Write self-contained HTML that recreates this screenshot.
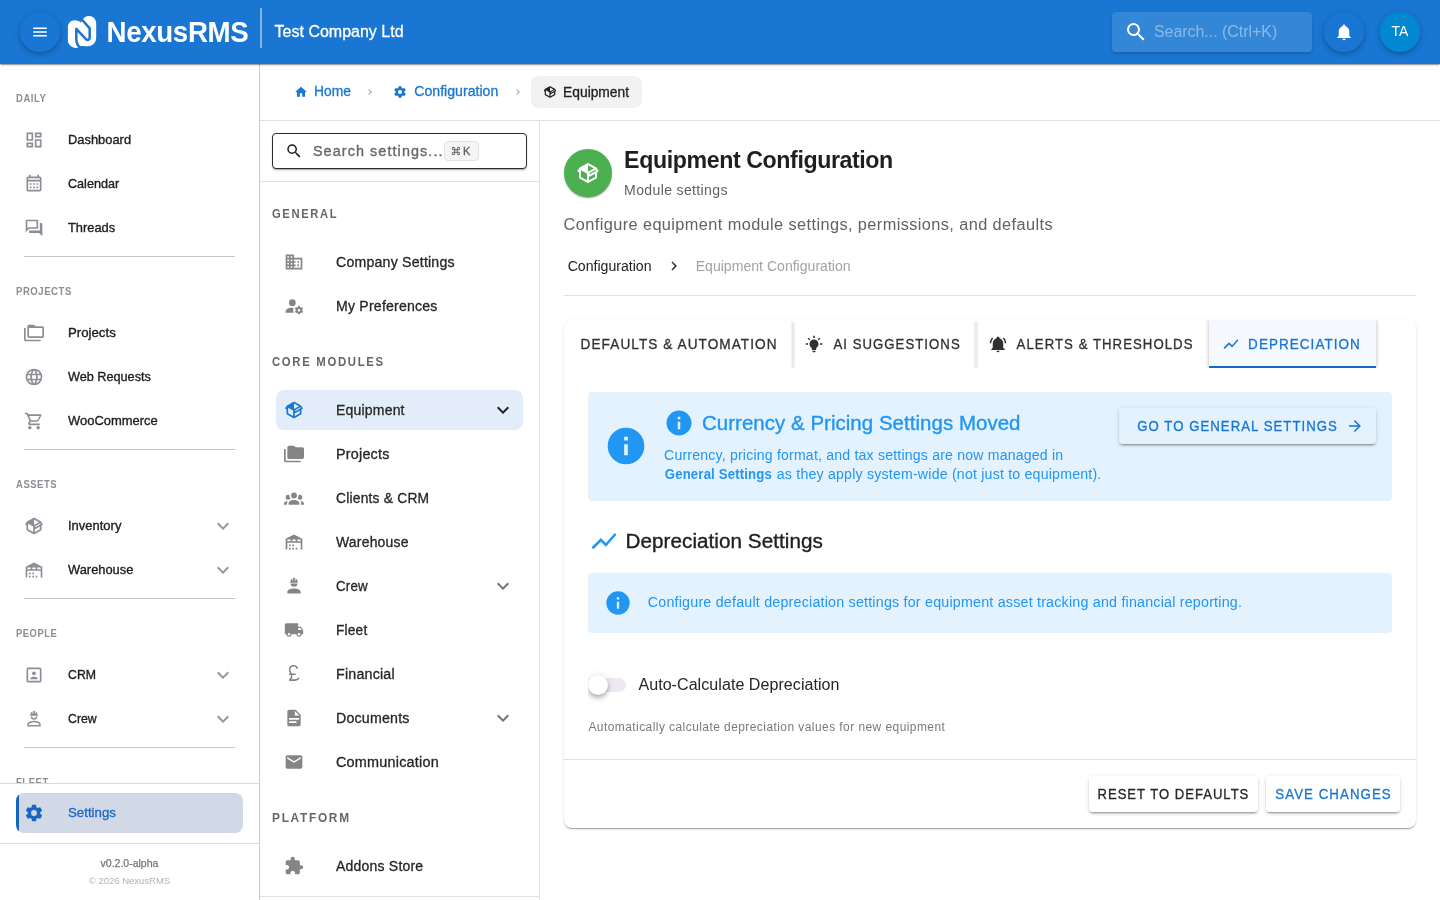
<!DOCTYPE html>
<html lang="en"><head>
<meta charset="utf-8">
<title>NexusRMS - Equipment Configuration</title>
<style>
*{box-sizing:border-box;margin:0;padding:0}
html,body{width:1440px;height:900px;overflow:hidden;background:#fff}
body{font-family:"Liberation Sans",sans-serif;color:#212121;font-size:14px;position:relative;will-change:transform}
svg{display:block;fill:currentColor}
.abs{position:absolute}
/* ---------- top bar ---------- */
#top{position:absolute;left:0;top:0;width:1440px;height:64px;background:#1976d2;z-index:10;box-shadow:0 2px 1px -1px rgba(0,0,0,.2),0 1px 1px 0 rgba(0,0,0,.14),0 1px 3px 0 rgba(0,0,0,.12)}
#menubtn{position:absolute;left:20px;top:12px;width:40px;height:40px;border-radius:50%;background:#1976d2;box-shadow:0 3px 5px -1px rgba(0,0,0,.2),0 1px 8px 0 rgba(0,0,0,.12);color:#fff}
#menubtn svg{position:absolute;left:11px;top:11px;width:18px;height:18px}
#logo{position:absolute;left:62px;top:10px;width:40px;height:44px}
#brand{position:absolute;left:107px;top:14px;color:#fff;font-weight:700;font-size:29px;line-height:36px;letter-spacing:-.4px;white-space:nowrap}
#vdiv{position:absolute;left:260px;top:8px;width:2px;height:40px;background:rgba(255,255,255,.45)}
#company{position:absolute;left:274px;top:22px;color:#fff;font-size:16px;line-height:20px;white-space:nowrap;-webkit-text-stroke:.3px #fff}
#tsearch{position:absolute;left:1112px;top:12px;width:200px;height:40px;border-radius:4px;background:rgba(255,255,255,.12);box-shadow:0 2px 3px rgba(0,0,0,.18);color:#fff}
#tsearch svg{position:absolute;left:12px;top:8px;width:24px;height:24px}
#tsearch span{position:absolute;left:42px;top:10px;font-size:16px;line-height:20px;color:rgba(255,255,255,.42);white-space:nowrap}
#bell{position:absolute;left:1324px;top:12px;width:40px;height:40px;border-radius:50%;background:#1976d2;box-shadow:0 3px 5px -1px rgba(0,0,0,.2),0 1px 8px 0 rgba(0,0,0,.12);color:#fff}
#bell svg{position:absolute;left:11px;top:11px;width:18px;height:18px}
#avatar{position:absolute;left:1380px;top:12px;width:40px;height:40px;border-radius:50%;background:#0288d1;box-shadow:0 3px 5px -1px rgba(0,0,0,.2),0 1px 8px 0 rgba(0,0,0,.12);color:#fff;text-align:center;font-size:14px;line-height:38px}
/* ---------- left nav ---------- */
#nav{position:absolute;left:0;top:64px;width:260px;height:836px;border-right:1px solid #cdc8d5;background:#fff;overflow:hidden}
.nlabel{position:absolute;left:16px;font-size:10.5px;font-weight:700;letter-spacing:.6px;color:#8e8c94;line-height:12px;white-space:nowrap}
.nitem{position:absolute;left:16px;width:227px;height:40px}
.nitem svg.ic{position:absolute;left:8px;top:10px;width:20px;height:20px;color:#8e8c94}
.nitem span{position:absolute;left:52px;top:11px;font-size:13px;line-height:18px;color:#1d1d1f;white-space:nowrap;font-weight:400;-webkit-text-stroke:.35px #1d1d1f}
.nitem svg.ch{position:absolute;left:195px;top:8px;width:24px;height:24px;color:#97959d}
.nhr{position:absolute;left:24px;width:211px;height:1px;background:#c4c2ca}

#navscroll{position:absolute;left:0;top:0;width:259px;height:719px;overflow:hidden}
#navfoot{position:absolute;left:0;top:719px;width:259px;height:117px;border-top:1px solid #dcdae0;background:#fff}
#setitem{position:absolute;left:16px;top:9px;width:227px;height:40px;border-radius:8px;background:#d1d9e6;overflow:hidden;color:#1967c4}
#setitem i{position:absolute;left:0;top:0;width:3px;height:40px;background:#1565c0}
#setitem svg{position:absolute;left:8px;top:10px;width:20px;height:20px}
#setitem span{position:absolute;left:52px;top:11px;font-size:13.5px;line-height:18px;white-space:nowrap;-webkit-text-stroke:.3px #1967c4}
#navfoot:after{content:"";position:absolute;left:0;top:59px;width:259px;height:1px;background:#dcdae0}
#navver{position:absolute;left:0;top:73px;width:259px;text-align:center;font-size:10.5px;line-height:12px;color:#76747c;-webkit-text-stroke:.25px #76747c}
#navcopy{position:absolute;left:0;top:91px;width:259px;text-align:center;font-size:9.5px;line-height:12px;color:#b3b1b8}
/* ---------- settings sidebar ---------- */
#crumbs{position:absolute;left:260px;top:64px;width:1180px;height:57px;border-bottom:1px solid #e0e0e0;background:#fff}
#side{position:absolute;left:260px;top:121px;width:280px;height:779px;border-right:1px solid #e0e0e0;background:#fff;overflow:hidden}
#main{position:absolute;left:540px;top:121px;width:900px;height:779px;background:#fff;overflow:hidden}

.bc{position:absolute;top:17px;font-size:14px;line-height:20px;white-space:nowrap;-webkit-text-stroke:.3px currentColor}
#bcchip{position:absolute;left:271px;top:12px;width:111px;height:32px;border-radius:8px;background:#f2f2f2;color:#212121}
#bcchip svg{position:absolute;left:11.5px;top:9px;width:14px;height:14px}
#bcchip span{position:absolute;left:31.5px;top:5.5px;font-size:14px;line-height:20px;white-space:nowrap;-webkit-text-stroke:.3px currentColor}
#ssearch{position:absolute;left:12px;top:12px;width:255px;height:36px;border:1px solid #2b2b2b;border-radius:4px;background:#fff;box-shadow:0 2px 2px -1px rgba(0,0,0,.28),0 1px 2px 0 rgba(0,0,0,.12)}
#ssearch .mg{position:absolute;left:12px;top:8px;width:18px;height:18px;color:#212121}
#ssearch .ph{position:absolute;left:40px;top:7px;font-size:14px;line-height:20px;letter-spacing:1.05px;color:#686868;white-space:nowrap;-webkit-text-stroke:.35px currentColor}
#ssearch .kbd{position:absolute;left:170.5px;top:6.5px;width:35px;height:20px;border:1px solid #e2e2e2;border-radius:4px;background:#f5f5f5;color:#616161;font-size:11px;line-height:18px;font-weight:400;padding-left:18.5px;-webkit-text-stroke:.35px #616161}
#ssearch .kbd svg{position:absolute;left:6.5px;top:4px;width:10px;height:10px}
.shr{position:absolute;left:0;width:279px;height:1px;background:#e0e0e0}
.slabel{position:absolute;left:12px;font-size:12px;line-height:24px;letter-spacing:1.75px;color:#666;white-space:nowrap;font-weight:700}
.sitem{position:absolute;left:16px;width:247px;height:40px;border-radius:8px}
.sitem.act{background:#e3edf9}
.sitem svg.ic{position:absolute;left:8px;top:10px;width:20px;height:20px;color:#858585}
.sitem.act svg.ic{color:#1976d2}
.sitem span{position:absolute;left:60px;top:10px;font-size:14px;line-height:20px;letter-spacing:.2px;color:#262626;white-space:nowrap;-webkit-text-stroke:.3px currentColor}
.sitem svg.ch{position:absolute;left:215px;top:8px;width:24px;height:24px;color:#757575}
.sitem.act svg.ch{color:#212121}

#mavatar{position:absolute;left:24px;top:28px;width:48px;height:48px;border-radius:50%;background:#4caf50;color:#fff;box-shadow:0 2px 1px -1px rgba(0,0,0,.2),0 1px 1px 0 rgba(0,0,0,.14),0 1px 3px 0 rgba(0,0,0,.12)}
#mavatar svg{position:absolute;left:12px;top:12px;width:24px;height:24px}
#mtitle{position:absolute;left:84px;top:23px;font-size:23px;line-height:32px;font-weight:700;letter-spacing:-.4px;color:#1f1f1f;white-space:nowrap}
#msub{position:absolute;left:84px;top:59px;font-size:14px;line-height:20px;letter-spacing:.35px;color:#616161;white-space:nowrap}
#mdesc{position:absolute;left:24px;top:92px;font-size:16px;line-height:24px;letter-spacing:.4px;color:#616161;white-space:nowrap}
.mbc{position:absolute;top:135px;font-size:14px;line-height:20px;white-space:nowrap}
#mhr{position:absolute;left:24px;top:174px;width:852px;height:1px;background:#e0e0e0}
#card{position:absolute;left:24px;top:199px;width:852px;height:508px;border-radius:8px;background:#fff;box-shadow:0 2px 1px -1px rgba(0,0,0,.2),0 1px 1px 0 rgba(0,0,0,.14),0 1px 3px 0 rgba(0,0,0,.12)}
.tab{position:absolute;top:0;height:48px;color:#303030}
.tab svg{position:absolute;top:15px;width:18px;height:18px}
.tab span{position:absolute;top:14px;font-size:14px;line-height:20px;letter-spacing:1.1px;white-space:nowrap;-webkit-text-stroke:.3px currentColor}
.tab.on{color:#1976d2;background:#f5f9fd;box-shadow:0 0 4px rgba(0,0,0,.3);clip-path:inset(0 -6px 0 -6px)}
.tab.on i{position:absolute;left:0;bottom:0;width:100%;height:2px;background:#1668c6}
.tsep{position:absolute;top:1.5px;width:2px;height:46px;background:rgba(0,0,0,.15);filter:blur(1.1px)}
#al1{position:absolute;left:24px;top:72px;width:804px;height:108.5px;border-radius:4px;background:#e4f2fe;color:#2196f3}
#al1 .big{position:absolute;left:16px;top:31.5px;width:44px;height:44px}
#al1 .sm{position:absolute;left:75.5px;top:16px;width:30px;height:30px}
#al1 .t{position:absolute;left:114px;top:15px;font-size:20px;line-height:32px;white-space:nowrap;letter-spacing:.05px;-webkit-text-stroke:.35px currentColor}
#al1 .b{position:absolute;left:76px;top:53px;font-size:14px;line-height:19px;white-space:nowrap;letter-spacing:.2px}
#al1 .btn{position:absolute;left:531px;top:16px;width:257px;height:36px;border-radius:4px;background:#e4f2fe;color:#1976d2;box-shadow:0 3px 1px -2px rgba(0,0,0,.2),0 2px 2px 0 rgba(0,0,0,.14),0 1px 5px 0 rgba(0,0,0,.12)}
#al1 .btn span{position:absolute;left:18px;top:8px;font-size:14px;line-height:20px;letter-spacing:1.1px;white-space:nowrap;-webkit-text-stroke:.3px currentColor}
#al1 .btn svg{position:absolute;left:227px;top:9px;width:18px;height:18px}
#sech{position:absolute;left:62px;top:205px;font-size:20px;line-height:32px;color:#212121;white-space:nowrap;letter-spacing:.05px;-webkit-text-stroke:.35px currentColor}
#al2{position:absolute;left:24px;top:253px;width:804px;height:60px;border-radius:4px;background:#e4f2fe;color:#2196f3}
#al2 svg{position:absolute;left:16px;top:15.5px;width:28px;height:28px}
#al2 span{position:absolute;left:60px;top:19px;font-size:14px;line-height:20px;white-space:nowrap;letter-spacing:.2px}
#sw{position:absolute;left:24px;top:352.5px;width:40px;height:24px;clip-path:inset(-12px -12px -12px 0)}
#sw .tr{position:absolute;left:2px;top:5px;width:36px;height:14px;border-radius:7px;background:#efe9f2}
#sw .th{position:absolute;left:0;top:2px;width:20px;height:20px;border-radius:50%;background:#fff;box-shadow:0 2px 4px -1px rgba(0,0,0,.2),0 4px 5px 0 rgba(0,0,0,.14),0 1px 10px 0 rgba(0,0,0,.12)}
#swl{position:absolute;left:74px;top:353px;font-size:16px;line-height:24px;color:#262626;white-space:nowrap;letter-spacing:.05px}
#hint{position:absolute;left:24px;top:399px;font-size:12px;line-height:16px;color:#7a7a7a;white-space:nowrap;letter-spacing:.45px}
#chr{position:absolute;left:0;top:439px;width:852px;height:1px;background:#e0e0e0}
.fbtn{position:absolute;top:456px;height:36px;border-radius:4px;background:#fff;box-shadow:0 3px 1px -2px rgba(0,0,0,.2),0 2px 2px 0 rgba(0,0,0,.14),0 1px 5px 0 rgba(0,0,0,.12)}
.fbtn span{position:absolute;left:9.5px;top:8px;font-size:14px;line-height:20px;letter-spacing:1.1px;white-space:nowrap;-webkit-text-stroke:.3px currentColor}
#x16{transform-origin:0 50%;transform:scaleX(.905)}
.sitem svg.gbp{position:absolute;left:4px;top:6px;width:30px;height:30px}
</style>
<style id="fit">
#brand{transform-origin:0 50%;transform:translateX(-0.42px) scaleX(0.9562)}
#company{transform-origin:0 50%;transform:translateX(0.60px) scaleX(0.9998)}
#x1{transform-origin:0 50%;transform:translateX(-0.03px) scaleX(0.9938)}
#x2{transform-origin:0 50%;transform:scaleX(0.9038)}
#x3{transform-origin:0 50%;transform:scaleX(0.9913)}
#x4{transform-origin:0 50%;transform:scaleX(0.9699)}
#x5{transform-origin:0 50%;transform:scaleX(0.9875)}
#x6{transform-origin:0 50%;transform:scaleX(0.9100)}
#x7{transform-origin:0 50%;transform:scaleX(1.0170)}
#x8{transform-origin:0 50%;transform:scaleX(0.9742)}
#x9{transform-origin:0 50%;transform:scaleX(0.9971)}
#x10{transform-origin:0 50%;transform:scaleX(0.9023)}
#x11{transform-origin:0 50%;transform:scaleX(0.9984)}
#x12{transform-origin:0 50%;transform:scaleX(0.9907)}
#x13{transform-origin:0 50%;transform:scaleX(0.8952)}
#x14{transform-origin:0 50%;transform:scaleX(0.9454)}
#x15{transform-origin:0 50%;transform:scaleX(0.9485)}
#x17{transform-origin:0 50%;transform:scaleX(0.9819)}
#x18{transform-origin:0 50%;transform:translateX(-0.94px) scaleX(0.9888)}
#x19{transform-origin:0 50%;transform:translateX(0.30px) scaleX(1.0081)}
#x20{transform-origin:0 50%;transform:translateX(0.10px) scaleX(0.9851)}
#x21{transform-origin:0 50%;transform:translateX(-0.10px) scaleX(1.0284)}
#x23{transform-origin:0 50%;transform:scaleX(0.9337)}
#x24{transform-origin:0 50%;transform:scaleX(1.0101)}
#x25{transform-origin:0 50%;transform:scaleX(1.0079)}
#x26{transform-origin:0 50%;transform:scaleX(0.9473)}
#x27{transform-origin:0 50%;transform:scaleX(0.9996)}
#x28{transform-origin:0 50%;transform:scaleX(1.0269)}
#x29{transform-origin:0 50%;transform:scaleX(0.9886)}
#x30{transform-origin:0 50%;transform:scaleX(0.9973)}
#x31{transform-origin:0 50%;transform:scaleX(0.9530)}
#x32{transform-origin:0 50%;transform:scaleX(0.9779)}
#x33{transform-origin:0 50%;transform:scaleX(1.0175)}
#x34{transform-origin:0 50%;transform:scaleX(1.0142)}
#x35{transform-origin:0 50%;transform:scaleX(1.0300)}
#x36{transform-origin:0 50%;transform:scaleX(0.9873)}
#x37{transform-origin:0 50%;transform:scaleX(1.0013)}
#mtitle{transform-origin:0 50%;transform:translateX(0.10px) scaleX(1.0075)}
#msub{transform-origin:0 50%;transform:translateX(0.10px) scaleX(1.0039)}
#mdesc{transform-origin:0 50%;transform:translateX(-0.41px) scaleX(1.0192)}
#x38{transform-origin:0 50%;transform:translateX(-0.35px) scaleX(1.0076)}
#x39{transform-origin:0 50%;transform:translateX(-0.30px) scaleX(1.0052)}
#x40{transform-origin:0 50%;transform:translateX(-0.42px) scaleX(0.9717)}
#x41{transform-origin:0 50%;transform:translateX(1.45px) scaleX(0.9413)}
#x42{transform-origin:0 50%;transform:translateX(1.60px) scaleX(0.9427)}
#x43{transform-origin:0 50%;transform:translateX(-0.90px) scaleX(0.9620)}
#x44{transform-origin:0 50%;transform:translateX(-0.05px) scaleX(1.0217)}
#x45{transform-origin:0 50%;transform:translateX(0.07px) scaleX(1.0052)}
#x50{transform-origin:0 50%;transform:translateX(0.80px) scaleX(0.9365)}
#x51{transform-origin:0 50%;transform:translateX(-0.20px) scaleX(1.0106)}
#x46{transform-origin:0 50%;transform:translateX(0.20px) scaleX(0.9426)}
#sech{transform-origin:0 50%;transform:translateX(-0.45px) scaleX(1.0319)}
#x47{transform-origin:0 50%;transform:translateX(-0.24px) scaleX(1.0198)}
#swl{transform-origin:0 50%;transform:translateX(0.40px) scaleX(1.0030)}
#hint{transform-origin:0 50%;transform:translateX(0.40px) scaleX(0.9961)}
#x48{transform-origin:0 50%;transform:translateX(-1.50px) scaleX(0.9306)}
#x49{transform-origin:0 50%;transform:translateX(-0.70px) scaleX(0.9493)}
</style>
</head>
<body>
<svg width="0" height="0" style="position:absolute">
<defs>
<symbol id="i-menu" viewBox="0 0 24 24"><path d="M3,6H21V8H3V6M3,11H21V13H3V11M3,16H21V18H3V16Z"></path></symbol>
<symbol id="i-magnify" viewBox="0 0 24 24"><path d="M9.5,3A6.5,6.5 0 0,1 16,9.5C16,11.11 15.41,12.59 14.44,13.73L14.71,14H15.5L20.5,19L19,20.5L14,15.5V14.71L13.73,14.44C12.59,15.41 11.11,16 9.5,16A6.5,6.5 0 0,1 3,9.5A6.5,6.5 0 0,1 9.5,3M9.5,5C7,5 5,7 5,9.5C5,12 7,14 9.5,14C12,14 14,12 14,9.5C14,7 12,5 9.5,5Z"></path></symbol>
<symbol id="i-bell" viewBox="0 0 24 24"><path d="M21,19V20H3V19L5,17V11C5,7.9 7.03,5.17 10,4.29C10,4.19 10,4.1 10,4A2,2 0 0,1 12,2A2,2 0 0,1 14,4C14,4.1 14,4.19 14,4.29C16.97,5.17 19,7.9 19,11V17L21,19M14,21A2,2 0 0,1 12,23A2,2 0 0,1 10,21"></path></symbol>
<symbol id="i-dash" viewBox="0 0 24 24"><path d="M19,5V7H15V5H19M9,5V11H5V5H9M19,13V19H15V13H19M9,17V19H5V17H9M21,3H13V9H21V3M11,3H3V13H11V3M21,11H13V21H21V11M11,15H3V21H11V15Z"></path></symbol>
<symbol id="i-cal" viewBox="0 0 24 24"><path d="M7 11H9V13H7V11M21 5V19C21 20.11 20.11 21 19 21H5C3.89 21 3 20.1 3 19V5C3 3.9 3.9 3 5 3H6V1H8V3H16V1H18V3H19C20.11 3 21 3.9 21 5M5 7H19V5H5V7M19 19V9H5V19H19M15 13V11H17V13H15M11 13V11H13V13H11M7 15H9V17H7V15M15 17V15H17V17H15M11 17V15H13V17H11Z"></path></symbol>
<symbol id="i-forum" viewBox="0 0 24 24"><path d="M15,4V11H5.17L4,12.17V4H15M16,2H3A1,1 0 0,0 2,3V17L6,13H16A1,1 0 0,0 17,12V3A1,1 0 0,0 16,2M21,6H19V15H6V17A1,1 0 0,0 7,18H18L22,22V7A1,1 0 0,0 21,6Z"></path></symbol>
<symbol id="i-folders-o" viewBox="0 0 24 24"><path d="M22,4A2,2 0 0,1 24,6V16A2,2 0 0,1 22,18H6A2,2 0 0,1 4,16V4A2,2 0 0,1 6,2H12L14,4H22M2,6V20H20V22H2A2,2 0 0,1 0,20V11H0V6H2M6,6V16H22V6H6Z"></path></symbol>
<symbol id="i-folders" viewBox="0 0 24 24"><path d="M22,4H14L12,2H6A2,2 0 0,0 4,4V16A2,2 0 0,0 6,18H22A2,2 0 0,0 24,16V6A2,2 0 0,0 22,4M2,6H0V11H0V20A2,2 0 0,0 2,22H20V20H2V6Z"></path></symbol>
<symbol id="i-web" viewBox="0 0 24 24"><path d="M16.36,14C16.44,13.34 16.5,12.68 16.5,12C16.5,11.32 16.44,10.66 16.36,10H19.74C19.9,10.64 20,11.31 20,12C20,12.69 19.9,13.36 19.74,14M14.59,19.56C15.19,18.45 15.65,17.25 15.97,16H18.92C17.96,17.65 16.43,18.93 14.59,19.56M14.34,14H9.66C9.56,13.34 9.5,12.68 9.5,12C9.5,11.32 9.56,10.65 9.66,10H14.34C14.43,10.65 14.5,11.32 14.5,12C14.5,12.68 14.43,13.34 14.34,14M12,19.96C11.17,18.76 10.5,17.43 10.09,16H13.91C13.5,17.43 12.83,18.76 12,19.96M8,8H5.08C6.03,6.34 7.57,5.06 9.4,4.44C8.8,5.55 8.35,6.75 8,8M5.08,16H8C8.35,17.25 8.8,18.45 9.4,19.56C7.57,18.93 6.03,17.65 5.08,16M4.26,14C4.1,13.36 4,12.69 4,12C4,11.31 4.1,10.64 4.26,10H7.64C7.56,10.66 7.5,11.32 7.5,12C7.5,12.68 7.56,13.34 7.64,14M12,4.03C12.83,5.23 13.5,6.57 13.91,8H10.09C10.5,6.57 11.17,5.23 12,4.03M18.92,8H15.97C15.65,6.75 15.19,5.55 14.59,4.44C16.43,5.07 17.96,6.34 18.92,8M12,2C6.47,2 2,6.5 2,12A10,10 0 0,0 12,22A10,10 0 0,0 22,12A10,10 0 0,0 12,2Z"></path></symbol>
<symbol id="i-cart" viewBox="0 0 24 24"><path d="M17,18A2,2 0 0,1 19,20A2,2 0 0,1 17,22C15.89,22 15,21.1 15,20C15,18.89 15.89,18 17,18M1,2H4.27L5.21,4H20A1,1 0 0,1 21,5C21,5.17 20.95,5.34 20.88,5.5L17.3,11.97C16.96,12.58 16.3,13 15.55,13H8.1L7.2,14.63L7.17,14.75A0.25,0.25 0 0,0 7.42,15H19V17H7C5.89,17 5,16.1 5,15C5,14.65 5.09,14.32 5.24,14.04L6.6,11.59L3,4H1V2M7,18A2,2 0 0,1 9,20A2,2 0 0,1 7,22C5.89,22 5,21.1 5,20C5,18.89 5.89,18 7,18M16,11L18.78,6H6.14L8.5,11H16Z"></path></symbol>
<symbol id="i-box" viewBox="0 0 24 24"><path d="M2,10.96C1.5,10.68 1.35,10.07 1.63,9.59L3.13,7C3.24,6.8 3.41,6.66 3.6,6.58L11.43,2.18C11.59,2.06 11.79,2 12,2C12.21,2 12.41,2.06 12.57,2.18L20.47,6.62C20.66,6.72 20.82,6.88 20.91,7.08L22.36,9.6C22.64,10.08 22.47,10.69 22,10.96L21,11.54V16.5C21,16.88 20.79,17.21 20.47,17.38L12.57,21.82C12.41,21.94 12.21,22 12,22C11.79,22 11.59,21.94 11.43,21.82L3.53,17.38C3.21,17.21 3,16.88 3,16.5V10.96C2.7,11.13 2.32,11.14 2,10.96M12,4.15V4.15L12,10.85V10.85L17.96,7.5L12,4.15M5,15.91L11,19.29V12.58L12,13.15L5,9.21V15.91M19,15.91V12.69L14,15.59C13.67,15.77 13.3,15.76 13,15.6V19.29L19,15.91M13.85,13.36L20.13,9.73L19.55,8.72L13.27,12.35L13.85,13.36Z"></path></symbol>
<symbol id="i-wh" viewBox="0 0 24 24"><path d="M6,19H8V21H6V19M12,3L2,8V21H4V13H20V21H22V8L12,3M8,11H4V9H8V11M14,11H10V9H14V11M20,11H16V9H20V11M6,15H8V17H6V15M10,15H12V17H10V15M10,19H12V21H10V19M14,19H16V21H14V19Z"></path></symbol>
<symbol id="i-down" viewBox="0 0 24 24"><path d="M7.41,8.58L12,13.17L16.59,8.58L18,10L12,16L6,10L7.41,8.58Z"></path></symbol>
<symbol id="i-right" viewBox="0 0 24 24"><path d="M8.59,16.58L13.17,12L8.59,7.41L10,6L16,12L10,18L8.59,16.58Z"></path></symbol>
<symbol id="i-accbox" viewBox="0 0 24 24"><path d="M19,19H5V5H19M19,3H5A2,2 0 0,0 3,5V19A2,2 0 0,0 5,21H19A2,2 0 0,0 21,19V5A2,2 0 0,0 19,3M16.5,16.25C16.5,14.75 13.5,14 12,14C10.5,14 7.5,14.75 7.5,16.25V17H16.5M12,12.25A2.25,2.25 0 0,0 14.25,10A2.25,2.25 0 0,0 12,7.75A2.25,2.25 0 0,0 9.75,10A2.25,2.25 0 0,0 12,12.25Z"></path></symbol>
<symbol id="i-hat-o" viewBox="0 0 24 24"><path d="M16 9C16 14.33 8 14.33 8 9H10C10 11.67 14 11.67 14 9M20 18V21H4V18C4 15.33 9.33 14 12 14C14.67 14 20 15.33 20 18M18.1 18C18.1 17.36 14.97 15.9 12 15.9C9.03 15.9 5.9 17.36 5.9 18V19.1H18.1M12.5 2C12.78 2 13 2.22 13 2.5V5.5H14V3C15.45 3.67 16.34 5.16 16.25 6.75C16.25 6.75 16.95 6.89 17 8H7C7 6.89 7.75 6.75 7.75 6.75C7.66 5.16 8.55 3.67 10 3V5.5H11V2.5C11 2.22 11.22 2 11.5 2"></path></symbol>
<symbol id="i-hat" viewBox="0 0 24 24"><path d="M12,15C7.58,15 4,16.79 4,19V21H20V19C20,16.79 16.42,15 12,15M8,9A4,4 0 0,0 12,13A4,4 0 0,0 16,9M11.5,2C11.2,2 11,2.21 11,2.5V5.5H10V3C10,3 7.75,3.86 7.75,6.75C7.75,6.75 7,6.89 7,8H17C16.95,6.89 16.25,6.75 16.25,6.75C16.25,3.86 14,3 14,3V5.5H13V2.5C13,2.21 12.81,2 12.5,2H11.5Z"></path></symbol>
<symbol id="i-cog" viewBox="0 0 24 24"><path d="M12,15.5A3.5,3.5 0 0,1 8.5,12A3.5,3.5 0 0,1 12,8.5A3.5,3.5 0 0,1 15.5,12A3.5,3.5 0 0,1 12,15.5M19.43,12.97C19.47,12.65 19.5,12.33 19.5,12C19.5,11.67 19.47,11.34 19.43,11L21.54,9.37C21.73,9.22 21.78,8.95 21.66,8.73L19.66,5.27C19.54,5.05 19.27,4.96 19.05,5.05L16.56,6.05C16.04,5.66 15.5,5.32 14.87,5.07L14.5,2.42C14.46,2.18 14.25,2 14,2H10C9.75,2 9.54,2.18 9.5,2.42L9.13,5.07C8.5,5.32 7.96,5.66 7.44,6.05L4.95,5.05C4.73,4.96 4.46,5.05 4.34,5.27L2.34,8.73C2.21,8.95 2.27,9.22 2.46,9.37L4.57,11C4.53,11.34 4.5,11.67 4.5,12C4.5,12.33 4.53,12.65 4.57,12.97L2.46,14.63C2.27,14.78 2.21,15.05 2.34,15.27L4.34,18.73C4.46,18.95 4.73,19.03 4.95,18.95L7.44,17.94C7.96,18.34 8.5,18.68 9.13,18.93L9.5,21.58C9.54,21.82 9.75,22 10,22H14C14.25,22 14.46,21.82 14.5,21.58L14.87,18.93C15.5,18.67 16.04,18.34 16.56,17.94L19.05,18.95C19.27,19.03 19.54,18.95 19.66,18.73L21.66,15.27C21.78,15.05 21.73,14.78 21.54,14.63L19.43,12.97Z"></path></symbol>
<symbol id="i-home" viewBox="0 0 24 24"><path d="M10,20V14H14V20H19V12H22L12,3L2,12H5V20H10Z"></path></symbol>
<symbol id="i-domain" viewBox="0 0 24 24"><path d="M18,15H16V17H18M18,11H16V13H18M20,19H12V17H14V15H12V13H14V11H12V9H20M10,7H8V5H10M10,11H8V9H10M10,15H8V13H10M10,19H8V17H10M6,7H4V5H6M6,11H4V9H6M6,15H4V13H6M6,19H4V17H6M12,7V3H2V21H22V7H12Z"></path></symbol>
<symbol id="i-acccog" viewBox="0 0 24 24"><path d="M10 4A4 4 0 0 0 6 8A4 4 0 0 0 10 12A4 4 0 0 0 14 8A4 4 0 0 0 10 4M17 12C16.87 12 16.76 12.09 16.74 12.21L16.55 13.53C16.25 13.66 15.96 13.82 15.7 14L14.46 13.5C14.35 13.5 14.22 13.5 14.15 13.63L13.15 15.36C13.09 15.47 13.11 15.6 13.21 15.68L14.27 16.5C14.25 16.67 14.24 16.83 14.24 17C14.24 17.17 14.25 17.33 14.27 17.5L13.21 18.32C13.12 18.4 13.09 18.53 13.15 18.64L14.15 20.37C14.21 20.5 14.34 20.5 14.46 20.5L15.7 20C15.96 20.18 16.24 20.35 16.55 20.47L16.74 21.79C16.76 21.91 16.86 22 17 22H19C19.11 22 19.22 21.91 19.24 21.79L19.43 20.47C19.73 20.34 20 20.18 20.27 20L21.5 20.5C21.63 20.5 21.76 20.5 21.83 20.37L22.83 18.64C22.89 18.53 22.86 18.4 22.77 18.32L21.7 17.5C21.72 17.33 21.74 17.17 21.74 17C21.74 16.83 21.73 16.67 21.7 16.5L22.76 15.68C22.85 15.6 22.88 15.47 22.82 15.36L21.82 13.63C21.76 13.5 21.63 13.5 21.5 13.5L20.27 14C20 13.82 19.73 13.65 19.42 13.53L19.23 12.21C19.22 12.09 19.11 12 19 12H17M10 14C5.58 14 2 15.79 2 18V20H11.68A7 7 0 0 1 11 17A7 7 0 0 1 11.64 14.09C11.11 14.03 10.56 14 10 14M18 15.5C18.83 15.5 19.5 16.17 19.5 17C19.5 17.83 18.83 18.5 18 18.5C17.16 18.5 16.5 17.83 16.5 17C16.5 16.17 17.17 15.5 18 15.5Z"></path></symbol>
<symbol id="i-group" viewBox="0 0 24 24"><path d="M12,5.5A3.5,3.5 0 0,1 15.5,9A3.5,3.5 0 0,1 12,12.5A3.5,3.5 0 0,1 8.5,9A3.5,3.5 0 0,1 12,5.5M5,8C5.56,8 6.08,8.15 6.53,8.42C6.38,9.85 6.8,11.27 7.66,12.38C7.16,13.34 6.16,14 5,14A3,3 0 0,1 2,11A3,3 0 0,1 5,8M19,8A3,3 0 0,1 22,11A3,3 0 0,1 19,14C17.84,14 16.84,13.34 16.34,12.38C17.2,11.27 17.62,9.85 17.47,8.42C17.92,8.15 18.44,8 19,8M5.5,18.25C5.5,16.18 8.41,14.5 12,14.5C15.59,14.5 18.5,16.18 18.5,18.25V20H5.5V18.25M0,20V18.5C0,17.11 1.89,15.94 4.45,15.6C3.86,16.28 3.5,17.22 3.5,18.25V20H0M24,20H20.5V18.25C20.5,17.22 20.14,16.28 19.55,15.6C22.11,15.94 24,17.11 24,18.5V20Z"></path></symbol>
<symbol id="i-truck" viewBox="0 0 24 24"><path d="M18,18.5A1.5,1.5 0 0,0 19.5,17A1.5,1.5 0 0,0 18,15.5A1.5,1.5 0 0,0 16.5,17A1.5,1.5 0 0,0 18,18.5M19.5,9.5H17V12H21.46L19.5,9.5M6,18.5A1.5,1.5 0 0,0 7.5,17A1.5,1.5 0 0,0 6,15.5A1.5,1.5 0 0,0 4.5,17A1.5,1.5 0 0,0 6,18.5M20,8L23,12V17H21A3,3 0 0,1 18,20A3,3 0 0,1 15,17H9A3,3 0 0,1 6,20A3,3 0 0,1 3,17H1V6C1,4.89 1.89,4 3,4H17V8H20Z"></path></symbol>
<symbol id="i-gbp" viewBox="0 0 24 24"><path d="M6.5,21V19.75C7.44,19.29 8.24,18.57 8.81,17.69C9.38,16.81 9.68,15.79 9.7,14.75H6.5V12.75H9.22C9.04,12.17 8.81,11.61 8.63,11.07C8.26,10 8.08,8.92 8.05,7.82C8,6.39 8.55,5 9.57,4C10.72,3.21 12.1,2.85 13.5,3C14.76,2.91 16,3.33 17,4.12C17.88,5 18.41,6.16 18.5,7.4H15.39C15.36,6.82 15.14,6.27 14.77,5.83C14.38,5.5 13.87,5.34 13.36,5.38C12.75,5.33 12.16,5.59 11.79,6.07C11.45,6.58 11.28,7.18 11.3,7.79C11.32,8.74 11.5,9.69 11.85,10.58C12.07,11.28 12.33,12 12.5,12.75H15.5V14.75H12.72C12.78,15.57 12.64,16.39 12.3,17.14C11.97,17.78 11.5,18.34 10.9,18.75H18.5V21H6.5Z"></path></symbol>
<symbol id="i-doc" viewBox="0 0 24 24"><path d="M13,9H18.5L13,3.5V9M6,2H14L20,8V20A2,2 0 0,1 18,22H6C4.89,22 4,21.1 4,20V4C4,2.89 4.89,2 6,2M15,18V16H6V18H15M18,14V12H6V14H18Z"></path></symbol>
<symbol id="i-email" viewBox="0 0 24 24"><path d="M20,8L12,13L4,8V6L12,11L20,6M20,4H4C2.89,4 2,4.89 2,6V18A2,2 0 0,0 4,20H20A2,2 0 0,0 22,18V6C22,4.89 21.1,4 20,4Z"></path></symbol>
<symbol id="i-puzzle" viewBox="0 0 24 24"><path d="M20.5,11H19V7C19,5.89 18.1,5 17,5H13V3.5A2.5,2.5 0 0,0 10.5,1A2.5,2.5 0 0,0 8,3.5V5H4A2,2 0 0,0 2,7V10.8H3.5C5,10.8 6.2,12 6.2,13.5C6.2,15 5,16.2 3.5,16.2H2V20A2,2 0 0,0 4,22H7.8V20.5C7.8,19 9,17.8 10.5,17.8C12,17.8 13.2,19 13.2,20.5V22H17A2,2 0 0,0 19,20V16H20.5A2.5,2.5 0 0,0 23,13.5A2.5,2.5 0 0,0 20.5,11Z"></path></symbol>
<symbol id="i-bulb" viewBox="0 0 24 24"><path d="M12,6A6,6 0 0,1 18,12C18,14.22 16.79,16.16 15,17.2V19A1,1 0 0,1 14,20H10A1,1 0 0,1 9,19V17.2C7.21,16.16 6,14.22 6,12A6,6 0 0,1 12,6M14,21V22A1,1 0 0,1 13,23H11A1,1 0 0,1 10,22V21H14M20,11H23V13H20V11M1,11H4V13H1V11M13,1V4H11V1H13M4.92,3.5L7.05,5.64L5.63,7.05L3.5,4.93L4.92,3.5M16.95,5.63L19.07,3.5L20.5,4.93L18.37,7.05L16.95,5.63Z"></path></symbol>
<symbol id="i-bellring" viewBox="0 0 24 24"><path d="M21,19V20H3V19L5,17V11C5,7.9 7.03,5.17 10,4.29C10,4.19 10,4.1 10,4A2,2 0 0,1 12,2A2,2 0 0,1 14,4C14,4.1 14,4.19 14,4.29C16.97,5.17 19,7.9 19,11V17L21,19M14,21A2,2 0 0,1 12,23A2,2 0 0,1 10,21M19.75,3.19L18.33,4.61C20.04,6.3 21,8.6 21,11H23C23,8.07 21.84,5.25 19.75,3.19M1,11H3C3,8.6 3.96,6.3 5.67,4.61L4.25,3.19C2.16,5.25 1,8.07 1,11Z"></path></symbol>
<symbol id="i-chart" viewBox="0 0 24 24"><path d="M3.5,18.5L9.5,12.5L13.5,16.5L22,6.92L20.59,5.5L13.5,13.5L9.5,9.5L2,17L3.5,18.5Z"></path></symbol>
<symbol id="i-info" viewBox="0 0 24 24"><path d="M13,9H11V7H13M13,17H11V11H13M12,2A10,10 0 0,0 2,12A10,10 0 0,0 12,22A10,10 0 0,0 22,12A10,10 0 0,0 12,2Z"></path></symbol>
<symbol id="i-arrow" viewBox="0 0 24 24"><path d="M4,11V13H16L10.5,18.5L11.92,19.92L19.84,12L11.92,4.08L10.5,5.5L16,11H4Z"></path></symbol>
<symbol id="i-cmd" viewBox="0 0 24 24"><path d="M6,2A4,4 0 0,1 10,6V8H14V6A4,4 0 0,1 18,2A4,4 0 0,1 22,6A4,4 0 0,1 18,10H16V14H18A4,4 0 0,1 22,18A4,4 0 0,1 18,22A4,4 0 0,1 14,18V16H10V18A4,4 0 0,1 6,22A4,4 0 0,1 2,18A4,4 0 0,1 6,14H8V10H6A4,4 0 0,1 2,6A4,4 0 0,1 6,2M16,18A2,2 0 0,0 18,20A2,2 0 0,0 20,18A2,2 0 0,0 18,16H16V18M14,10H10V14H14V10M6,16A2,2 0 0,0 4,18A2,2 0 0,0 6,20A2,2 0 0,0 8,18V16H6M8,6A2,2 0 0,0 6,4A2,2 0 0,0 4,6A2,2 0 0,0 6,8H8V6M18,8A2,2 0 0,0 20,6A2,2 0 0,0 18,4A2,2 0 0,0 16,6V8H18Z"></path></symbol>
</defs>
</svg>

<!-- TOP BAR -->
<div id="top">
  <div id="menubtn"><svg><use href="#i-menu"></use></svg></div>
  <svg id="logo" viewBox="0 0 40 44"><path fill="#fff" d="M5.9,17 C5.9,13.2 8.9,10.3 12.7,10.3 C15.3,10.3 17.2,11.2 18.8,12.6 L20.2,10.8 C21.4,8 23.8,6.1 26.9,6.1 C31,6.1 34.2,9.3 34.2,13.3 L34.2,27.5 C34.2,32.5 30.5,36.2 25.8,36.2 C22.6,36.2 20.2,35.4 18,36.5 C17,37.4 15.6,37.9 14,37.9 C9.5,37.9 5.9,34.5 5.9,30 Z"/><path fill="none" stroke="#1976d2" stroke-width="2.5" stroke-linejoin="round" stroke-linecap="butt" d="M19.4,9 L27.7,18.4 V27 C27.6,30.4 25.2,30.6 23.4,28.7 L14.3,18.9 V29 C14.3,33 15.6,35.6 18.6,38.2"/></svg>
  <div id="brand">NexusRMS</div>
  <div id="vdiv"></div>
  <div id="company">Test Company Ltd</div>
  <div id="tsearch"><svg><use href="#i-magnify"></use></svg><span id="x1">Search... (Ctrl+K)</span></div>
  <div id="bell"><svg><use href="#i-bell"></use></svg></div>
  <div id="avatar">TA</div>
</div>

<!-- LEFT NAV -->
<div id="nav">

<div id="navscroll">
<div class="nlabel" style="top:28px" id="x2">DAILY</div>
<div class="nitem" style="top:56px"><svg class="ic"><use href="#i-dash"></use></svg><span id="x3">Dashboard</span></div>
<div class="nitem" style="top:100px"><svg class="ic"><use href="#i-cal"></use></svg><span id="x4">Calendar</span></div>
<div class="nitem" style="top:144px"><svg class="ic"><use href="#i-forum"></use></svg><span id="x5">Threads</span></div>
<div class="nhr" style="top:192px"></div>
<div class="nlabel" style="top:221px" id="x6">PROJECTS</div>
<div class="nitem" style="top:249px"><svg class="ic"><use href="#i-folders-o"></use></svg><span id="x7">Projects</span></div>
<div class="nitem" style="top:293px"><svg class="ic"><use href="#i-web"></use></svg><span id="x8">Web Requests</span></div>
<div class="nitem" style="top:337px"><svg class="ic"><use href="#i-cart"></use></svg><span id="x9">WooCommerce</span></div>
<div class="nhr" style="top:385px"></div>
<div class="nlabel" style="top:414px" id="x10">ASSETS</div>
<div class="nitem" style="top:442px"><svg class="ic"><use href="#i-box"></use></svg><span id="x11">Inventory</span><svg class="ch"><use href="#i-down"></use></svg></div>
<div class="nitem" style="top:486px"><svg class="ic"><use href="#i-wh"></use></svg><span id="x12">Warehouse</span><svg class="ch"><use href="#i-down"></use></svg></div>
<div class="nhr" style="top:534px"></div>
<div class="nlabel" style="top:563px" id="x13">PEOPLE</div>
<div class="nitem" style="top:591px"><svg class="ic"><use href="#i-accbox"></use></svg><span id="x14">CRM</span><svg class="ch"><use href="#i-down"></use></svg></div>
<div class="nitem" style="top:635px"><svg class="ic"><use href="#i-hat-o"></use></svg><span id="x15">Crew</span><svg class="ch"><use href="#i-down"></use></svg></div>
<div class="nhr" style="top:683px"></div>
<div class="nlabel" style="top:712px" id="x16">FLEET</div>
</div>
<div id="navfoot">
  <div id="setitem"><i></i><svg><use href="#i-cog"></use></svg><span id="x17">Settings</span></div>
  <div id="navver">v0.2.0-alpha</div>
  <div id="navcopy">© 2026 NexusRMS</div>
</div>

</div>

<!-- BREADCRUMBS -->
<div id="crumbs">

<svg class="abs" style="left:34px;top:21px;width:14px;height:14px;color:#1976d2"><use href="#i-home"></use></svg>
<span class="bc" style="left:54.5px;color:#1976d2" id="x18">Home</span>
<svg class="abs" style="left:103.5px;top:22px;width:12px;height:12px;color:#a6a6a6"><use href="#i-right"></use></svg>
<svg class="abs" style="left:133px;top:21px;width:14px;height:14px;color:#1976d2"><use href="#i-cog"></use></svg>
<span class="bc" style="left:154px;color:#1976d2" id="x19">Configuration</span>
<svg class="abs" style="left:252px;top:22px;width:12px;height:12px;color:#a6a6a6"><use href="#i-right"></use></svg>
<div id="bcchip"><svg><use href="#i-box"></use></svg><span id="x20">Equipment</span></div>

</div>

<!-- SETTINGS SIDEBAR -->
<div id="side">

<div id="ssearch"><svg class="mg"><use href="#i-magnify"></use></svg><span class="ph" id="x21">Search settings...</span><span class="kbd" id="x22"><svg><use href="#i-cmd"></use></svg>K</span></div>
<div class="shr" style="top:60px"></div>
<div class="slabel" style="top:81px" id="x23">GENERAL</div>
<div class="sitem" style="top:121px"><svg class="ic"><use href="#i-domain"></use></svg><span id="x24">Company Settings</span></div>
<div class="sitem" style="top:165px"><svg class="ic"><use href="#i-acccog"></use></svg><span id="x25">My Preferences</span></div>
<div class="slabel" style="top:229px" id="x26">CORE MODULES</div>
<div class="sitem act" style="top:269px"><svg class="ic"><use href="#i-box"></use></svg><span id="x27">Equipment</span><svg class="ch"><use href="#i-down"></use></svg></div>
<div class="sitem" style="top:313px"><svg class="ic"><use href="#i-folders"></use></svg><span id="x28">Projects</span></div>
<div class="sitem" style="top:357px"><svg class="ic"><use href="#i-group"></use></svg><span id="x29">Clients &amp; CRM</span></div>
<div class="sitem" style="top:401px"><svg class="ic"><use href="#i-wh"></use></svg><span id="x30">Warehouse</span></div>
<div class="sitem" style="top:445px"><svg class="ic"><use href="#i-hat"></use></svg><span id="x31">Crew</span><svg class="ch"><use href="#i-down"></use></svg></div>
<div class="sitem" style="top:489px"><svg class="ic"><use href="#i-truck"></use></svg><span id="x32">Fleet</span></div>
<div class="sitem" style="top:533px"><svg class="gbp" viewBox="0 0 30 30"><path fill="none" stroke="#858585" stroke-width="1.55" stroke-linecap="butt" stroke-linejoin="round" d="M17.5,8.7C16.9,6.7 15.4,5.7 13.6,5.7C11.3,5.7 9.7,7.4 9.7,9.7C9.7,11.7 10.7,12.8 11.3,14.3C12.1,16.6 11.4,18.6 9.5,20.1M9.1,20.1H15.4C17.2,20.1 18.2,19.3 18.8,17.9M9.1,14.2H15.7"/></svg><span id="x33">Financial</span></div>
<div class="sitem" style="top:577px"><svg class="ic"><use href="#i-doc"></use></svg><span id="x34">Documents</span><svg class="ch"><use href="#i-down"></use></svg></div>
<div class="sitem" style="top:621px"><svg class="ic"><use href="#i-email"></use></svg><span id="x35">Communication</span></div>
<div class="slabel" style="top:685px" id="x36">PLATFORM</div>
<div class="sitem" style="top:725px"><svg class="ic"><use href="#i-puzzle"></use></svg><span id="x37">Addons Store</span></div>
<div class="shr" style="top:775px"></div>

</div>

<!-- MAIN -->
<div id="main">

<div id="mavatar"><svg><use href="#i-box"></use></svg></div>
<div id="mtitle">Equipment Configuration</div>
<div id="msub">Module settings</div>
<div id="mdesc">Configure equipment module settings, permissions, and defaults</div>
<span class="mbc" style="left:28px;color:#212121" id="x38">Configuration</span>
<svg class="abs" style="left:125px;top:136px;width:18px;height:18px;color:#333"><use href="#i-right"></use></svg>
<span class="mbc" style="left:156px;color:#a3a3a3" id="x39">Equipment Configuration</span>
<div id="mhr"></div>
<div id="card">
  <div class="tab" style="left:0;width:229px"><span style="left:17px" id="x40">DEFAULTS &amp; AUTOMATION</span></div>
  <div class="tsep" style="left:227.8px"></div>
  <div class="tab" style="left:229px;width:183px"><svg style="left:12px"><use href="#i-bulb"></use></svg><span style="left:39px" id="x41">AI SUGGESTIONS</span></div>
  <div class="tsep" style="left:410.6px"></div>
  <div class="tab" style="left:412px;width:233px"><svg style="left:12.5px;top:15px"><use href="#i-bellring"></use></svg><span style="left:39px" id="x42">ALERTS &amp; THRESHOLDS</span></div>
  <div class="tab on" style="left:645px;width:167px"><svg style="left:12.7px"><use href="#i-chart"></use></svg><span style="left:39.5px" id="x43">DEPRECIATION</span><i></i></div>

  <div id="al1">
    <svg class="big"><use href="#i-info"></use></svg>
    <svg class="sm"><use href="#i-info"></use></svg>
    <div class="t" id="x44">Currency &amp; Pricing Settings Moved</div>
    <div class="b" id="x45" style="top:54px">Currency, pricing format, and tax settings are now managed in</div><div class="b" id="x50" style="top:73px;font-weight:700">General Settings</div><div class="b" id="x51" style="top:73px;left:188.5px">as they apply system-wide (not just to equipment).</div>
    <div class="btn"><span id="x46">GO TO GENERAL SETTINGS</span><svg><use href="#i-arrow"></use></svg></div>
  </div>

  <svg class="abs" style="left:24.5px;top:206px;width:30px;height:30px;color:#2196f3"><use href="#i-chart"></use></svg>
  <div id="sech">Depreciation Settings</div>

  <div id="al2"><svg><use href="#i-info"></use></svg><span id="x47">Configure default depreciation settings for equipment asset tracking and financial reporting.</span></div>

  <div id="sw"><i class="tr"></i><i class="th"></i></div>
  <div id="swl">Auto-Calculate Depreciation</div>
  <div id="hint">Automatically calculate depreciation values for new equipment</div>
  <div id="chr"></div>
  <div class="fbtn" style="left:525px;width:169px;color:#262626"><span id="x48">RESET TO DEFAULTS</span></div>
  <div class="fbtn" style="left:702px;width:134px;color:#1976d2"><span id="x49">SAVE CHANGES</span></div>
</div>

</div>


</body></html>
